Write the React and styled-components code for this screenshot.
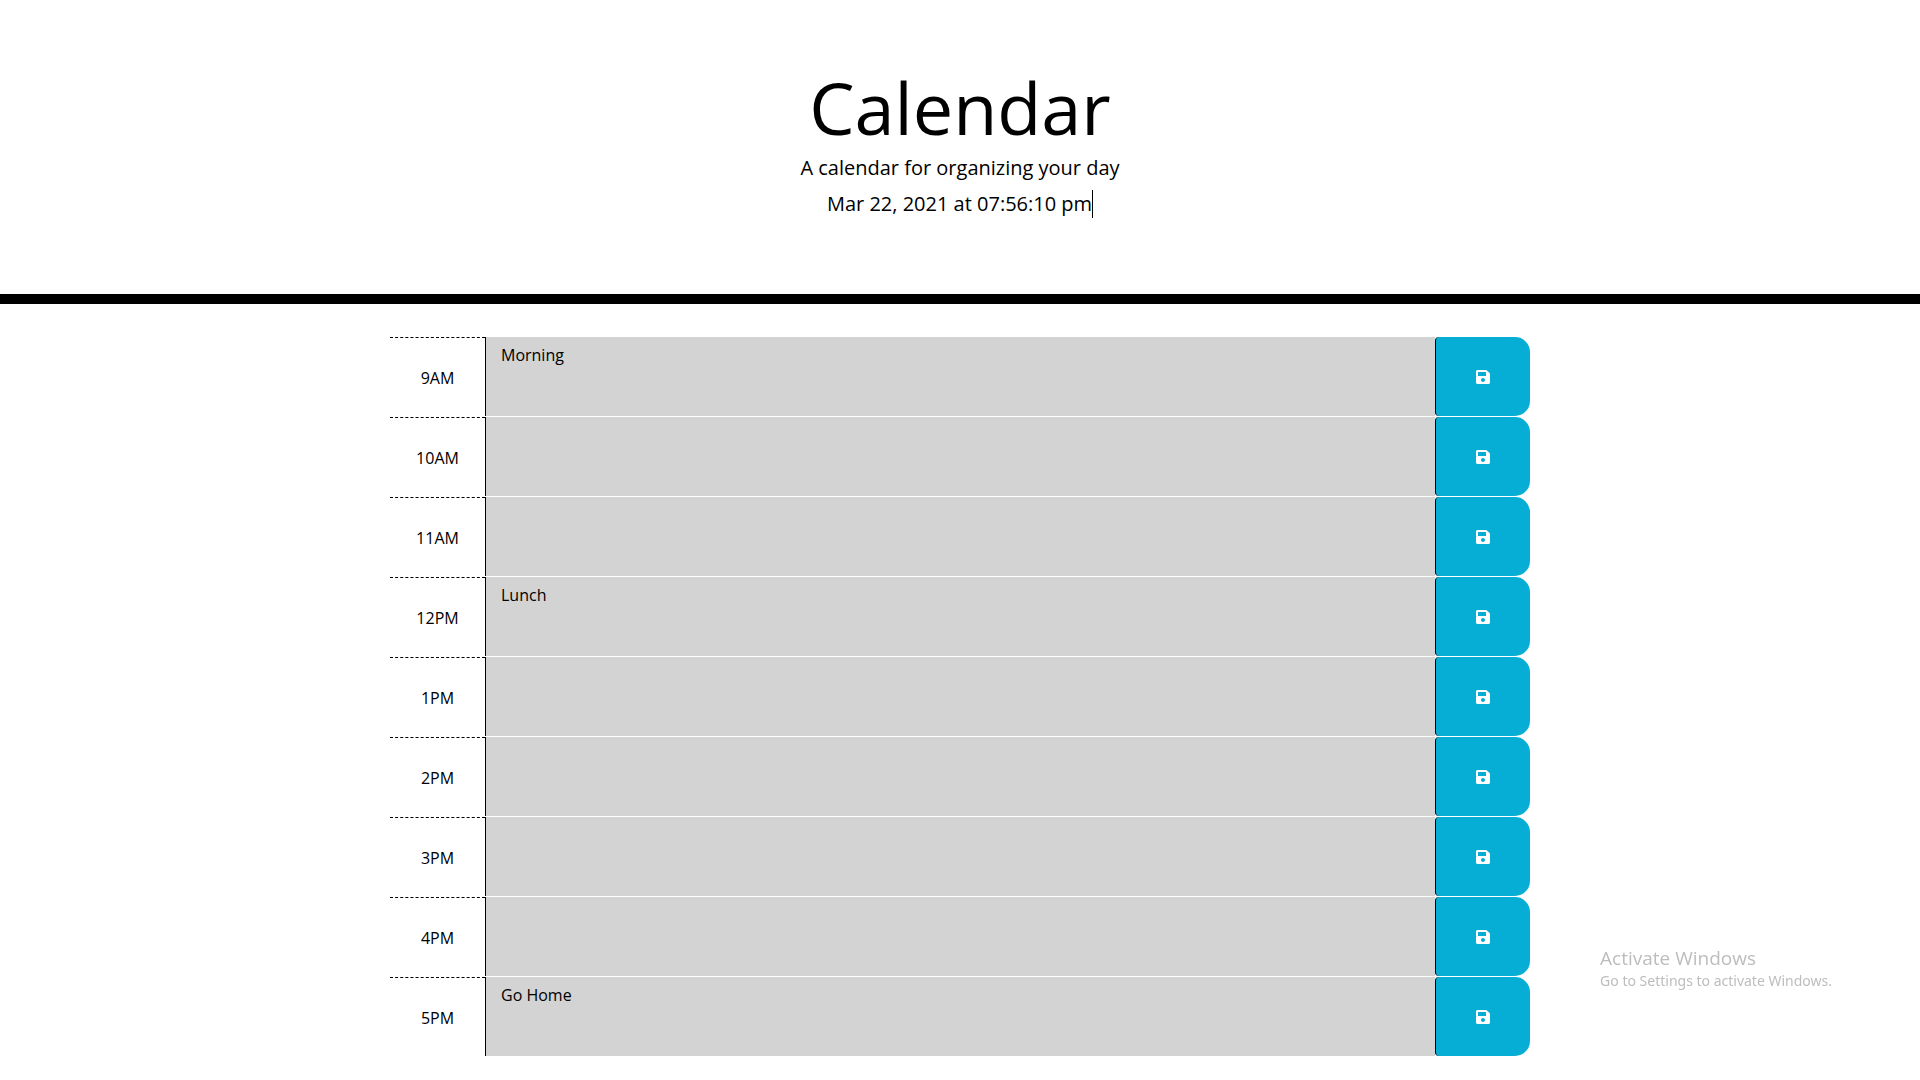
import React, { useState } from "react";
import styled, { createGlobalStyle } from "styled-components";
import { FaSave } from "react-icons/fa";

const GlobalStyle = createGlobalStyle`
  *, *::before, *::after { box-sizing: border-box; }
  body {
    margin: 0;
    background: #fff;
    color: #000;
    font-family: "Open Sans", "Noto Sans", sans-serif;
    font-size: 16px;
    line-height: 24px;
  }
`;

const Header = styled.header`
  display: flex;
  flex-direction: column;
  align-items: center;
  padding: 63px 32px 76px;
  border-bottom: 10px solid #000;
  text-align: center;
`;

const Title = styled.h1`
  margin: 0 0 2px;
  font-size: 72px;
  font-weight: 400;
  line-height: 88px;
`;

const Lead = styled.p`
  margin: 0 0 7px;
  font-size: 20px;
  line-height: 30px;
`;

const Clock = styled.time`
  border-right: 1px solid #000;
  font-size: 20px;
  line-height: 28px;
`;

const Schedule = styled.main`
  display: grid;
  gap: 1px;
  width: 100%;
  max-width: 1140px;
  margin: 33px auto 24px;
`;

const TimeBlock = styled.form`
  display: grid;
  grid-template-columns: 1fr 10fr 1fr;
  min-height: 79px;
`;

const Hour = styled.label`
  display: flex;
  align-items: center;
  justify-content: center;
  border-top: 1px dashed #000;
  padding-top: 2px;
`;

const Description = styled.textarea`
  width: 100%;
  margin: 0;
  padding: 6px 15px;
  border: 0;
  border-left: 1px solid #000;
  border-radius: 0;
  outline: 0;
  resize: none;
  background: #d3d3d3;
  color: #000;
  font: inherit;
`;

const SaveButton = styled.button`
  display: flex;
  align-items: center;
  justify-content: center;
  padding: 0;
  border: 0;
  border-left: 1px solid #000;
  border-radius: 4px 15px 15px 4px;
  background: #06aed5;
  color: #fff;
  font-size: 16px;
  cursor: pointer;
`;

const Watermark = styled.aside`
  position: fixed;
  right: 88px;
  bottom: 89px;
  color: #bdbdbd;
  font-family: "Noto Sans", "Open Sans", sans-serif;
  font-size: 14px;
  line-height: 20px;
  pointer-events: none;
`;

const WatermarkTitle = styled.div`
  font-family: "Open Sans", "Noto Sans", sans-serif;
  font-size: 19px;
  line-height: 26px;
`;

const initialEntries = [
  { hour: "9AM", text: "Morning" },
  { hour: "10AM", text: "" },
  { hour: "11AM", text: "" },
  { hour: "12PM", text: "Lunch" },
  { hour: "1PM", text: "" },
  { hour: "2PM", text: "" },
  { hour: "3PM", text: "" },
  { hour: "4PM", text: "" },
  { hour: "5PM", text: "Go Home" },
];

function HourRow({ hour, text }) {
  const [value, setValue] = useState(text);
  const id = `entry-${hour}`;
  return (
    <TimeBlock onSubmit={(event) => event.preventDefault()}>
      <Hour htmlFor={id}>{hour}</Hour>
      <Description
        id={id}
        rows={1}
        spellCheck={false}
        value={value}
        onChange={(event) => setValue(event.target.value)}
      />
      <SaveButton type="submit" aria-label={`Save ${hour}`}>
        <FaSave aria-hidden="true" />
      </SaveButton>
    </TimeBlock>
  );
}

export default function App() {
  return (
    <>
      <GlobalStyle />
      <Header>
        <Title>Calendar</Title>
        <Lead>A calendar for organizing your day</Lead>
        <Clock dateTime="2021-03-22T19:56:10">Mar 22, 2021 at 07:56:10 pm</Clock>
      </Header>
      <Schedule>
        {initialEntries.map((entry) => (
          <HourRow key={entry.hour} {...entry} />
        ))}
      </Schedule>
      <Watermark>
        <WatermarkTitle>Activate Windows</WatermarkTitle>
        Go to Settings to activate Windows.
      </Watermark>
    </>
  );
}
